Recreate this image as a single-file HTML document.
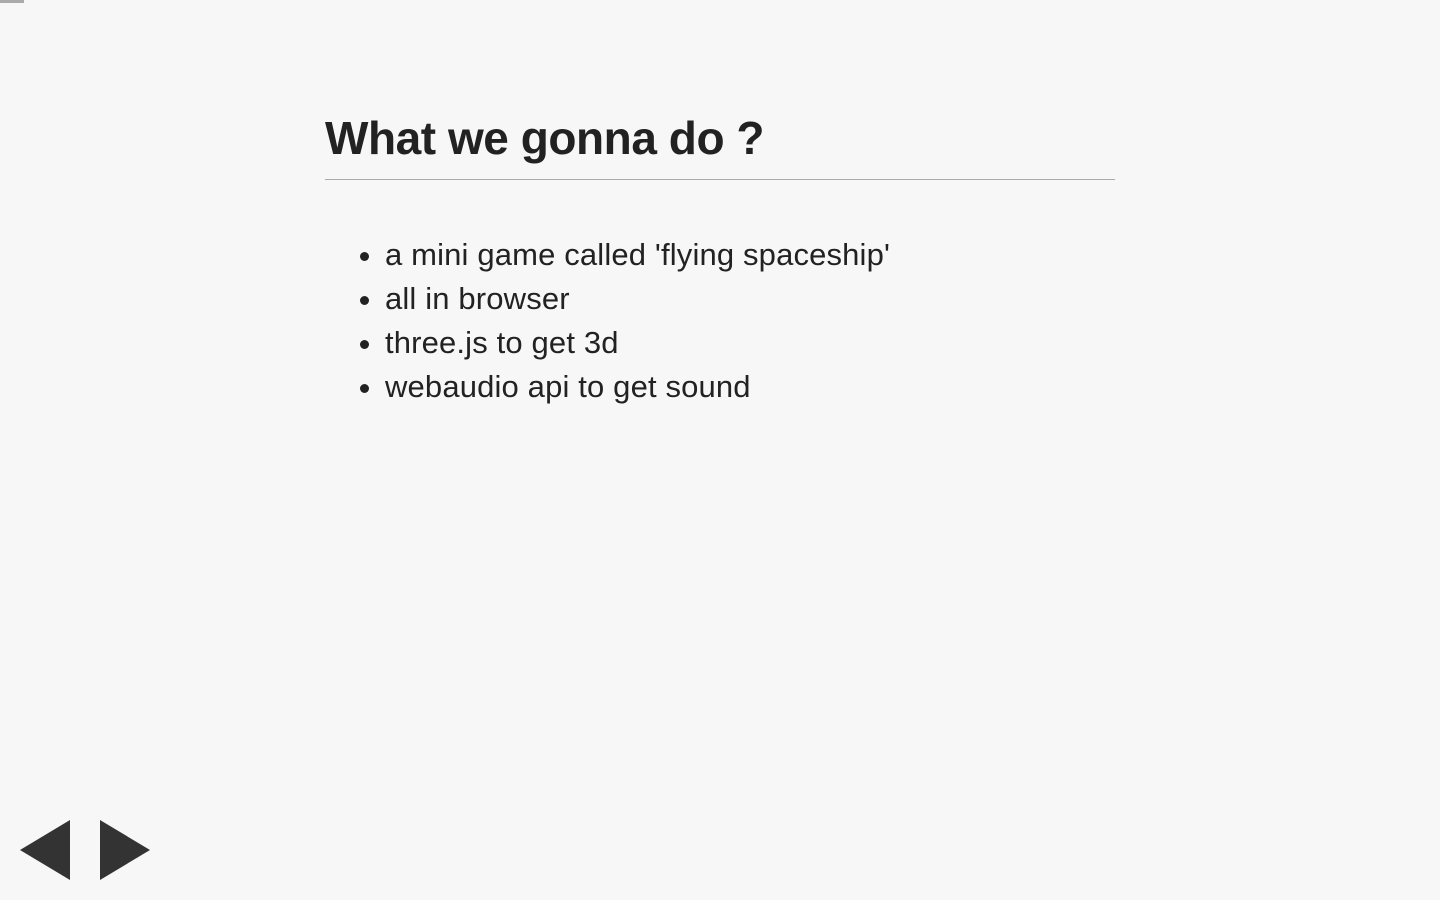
<!DOCTYPE html>
<html><head><style>
html,body{margin:0;padding:0;background:#f7f7f7;width:1440px;height:900px;overflow:hidden;font-family:"Liberation Sans",Arial,sans-serif;color:#222}
.bar{position:absolute;left:0;top:0;width:24px;height:3px;background:#aaa}
h1{position:absolute;left:325px;top:108px;margin:0;font-size:46px;font-weight:bold;line-height:60px;letter-spacing:-0.45px}
.hr{position:absolute;left:325px;top:179px;width:790px;height:1px;background:#aaa}
ul{position:absolute;left:325px;top:233px;margin:0;padding:0 0 0 60px;font-size:31px;line-height:44px;letter-spacing:0.15px}
.tri{position:absolute;top:820px;width:0;height:0;border-top:30px solid transparent;border-bottom:30px solid transparent}
</style></head><body>
<div class="bar"></div>
<h1>What we gonna do ?</h1>
<div class="hr"></div>
<ul>
<li>a mini game called 'flying spaceship'</li>
<li>all in browser</li>
<li>three.js to get 3d</li>
<li>webaudio api to get sound</li>
</ul>
<div class="tri" style="left:20px;border-right:50px solid #333"></div>
<div class="tri" style="left:100px;border-left:50px solid #333"></div>
</body></html>
